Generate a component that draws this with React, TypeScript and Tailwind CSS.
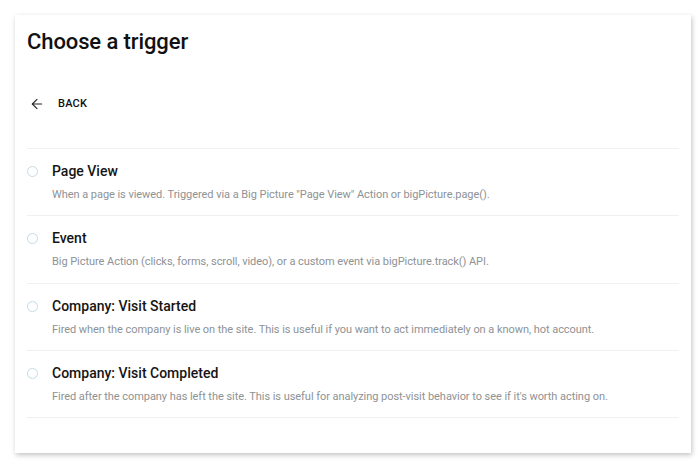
import { ArrowLeft } from "lucide-react";

const triggers = [
  {
    title: "Page View",
    desc: 'When a page is viewed. Triggered via a Big Picture "Page View" Action or bigPicture.page().',
  },
  {
    title: "Event",
    desc: "Big Picture Action (clicks, forms, scroll, video), or a custom event via bigPicture.track() API.",
  },
  {
    title: "Company: Visit Started",
    desc: "Fired when the company is live on the site. This is useful if you want to act immediately on a known, hot account.",
  },
  {
    title: "Company: Visit Completed",
    desc: "Fired after the company has left the site. This is useful for analyzing post-visit behavior to see if it's worth acting on.",
  },
];

export default function App() {
  return (
    <div className="w-[700px] h-[468px] bg-white pt-[15px] pl-[15px] font-['Roboto',sans-serif]">
      <div className="w-[676px] h-[438px] bg-white shadow-[1px_2px_5px_rgba(0,0,0,0.24)] px-3 pt-[13px]">
        <h1 className="text-[22px] leading-[28px] font-medium text-[#111] tracking-[-0.1px]">Choose a trigger</h1>
        <button className="flex items-center mt-[38px] ml-[2px] h-[20px]">
          <ArrowLeft className="w-[16px] h-[16px] text-[#222]" strokeWidth={1.6} />
          <span className="ml-[13px] text-[11px] font-medium tracking-[0.2px] text-[#111]">BACK</span>
        </button>
        <div className="mt-[34px] w-[652px] border-t border-[#eef0f1]">
          {triggers.map((t, i) => (
            <div
              key={t.title}
              className={`flex border-b border-[#eef0f1] pt-[13px] ${i === 1 ? "h-[68px]" : "h-[67px]"}`}
            >
              <div className="w-[25px] pt-[4px]">
                <div className="w-[11px] h-[11px] rounded-full border border-[#c5dbe8] bg-white" />
              </div>
              <div className="flex flex-col">
                <span className="text-[14px] leading-[18px] font-medium text-[#151515]">{t.title}</span>
                <span className="mt-[8px] text-[11px] leading-[14px] tracking-[-0.05px] text-[#8e9295]">{t.desc}</span>
              </div>
            </div>
          ))}
        </div>
      </div>
    </div>
  );
}
